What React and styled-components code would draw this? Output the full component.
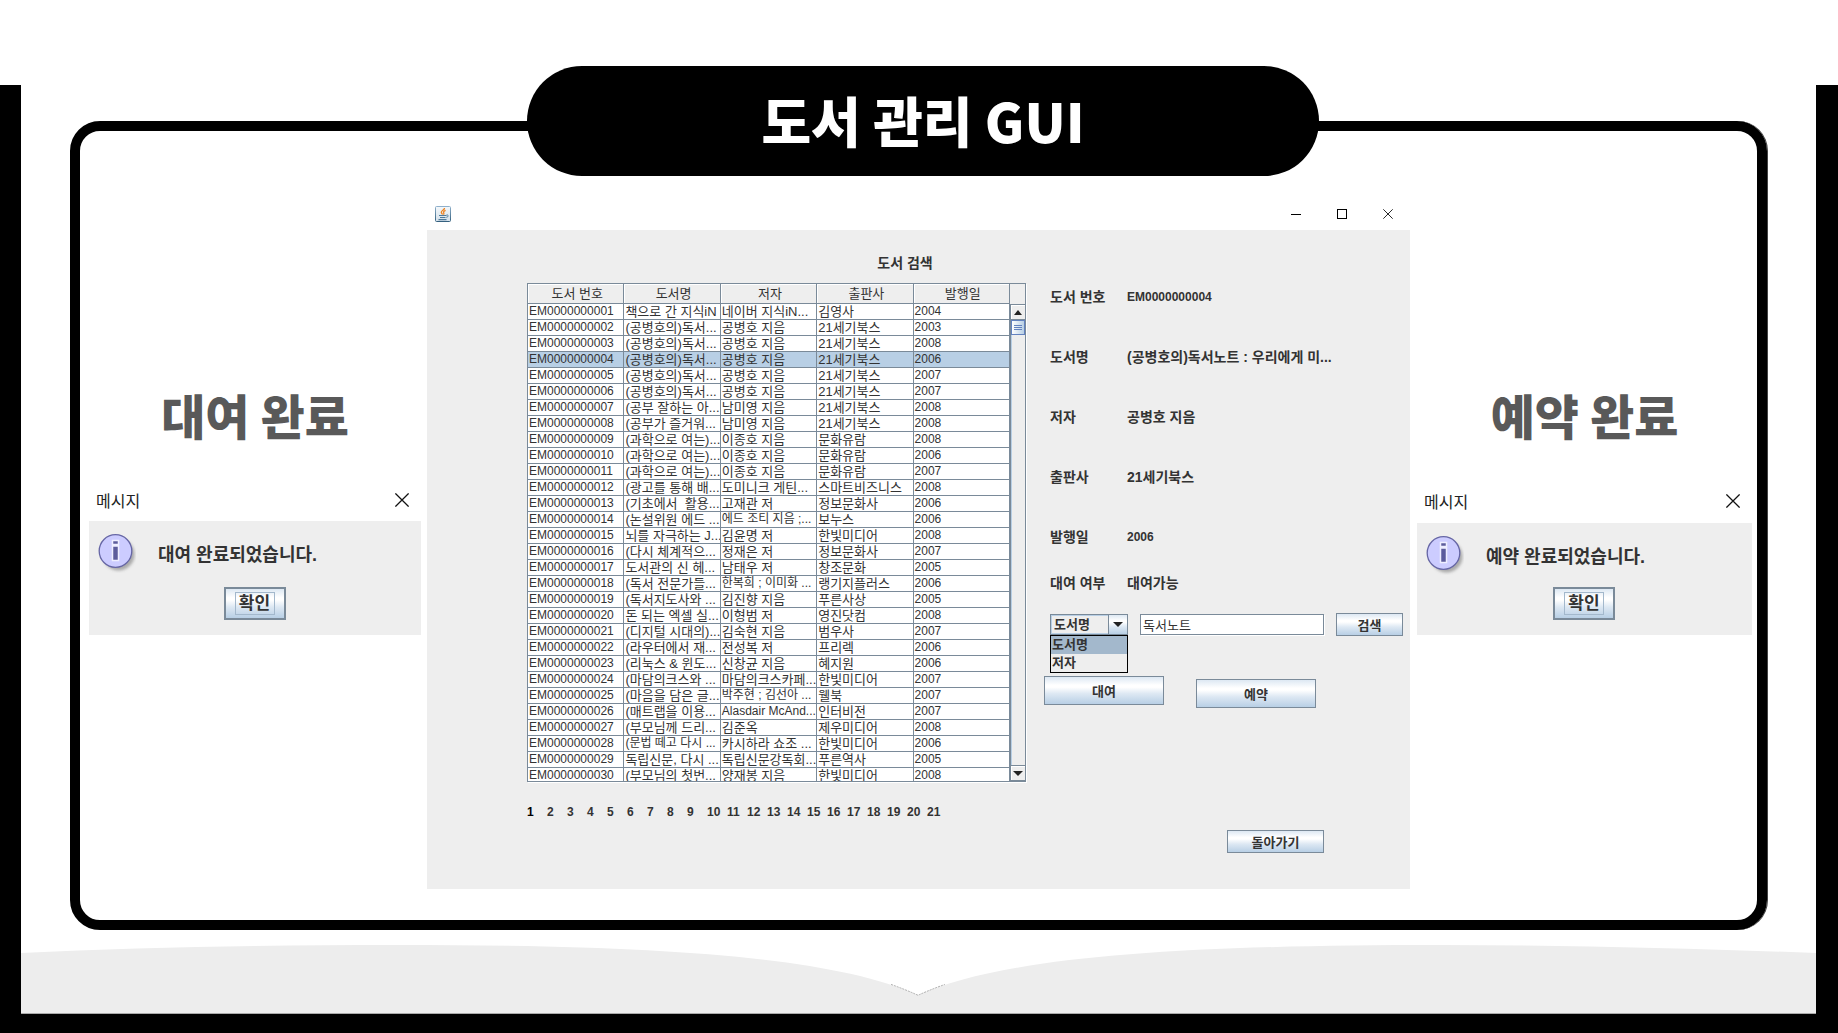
import React, { useState } from "react";
import styled, { createGlobalStyle, css } from "styled-components";

const GlobalStyle = createGlobalStyle`
  * { box-sizing: border-box; }
  body {
    margin: 0;
    background: #fff;
    color: #333;
    font-family: "Liberation Sans", "Noto Sans CJK KR", sans-serif;
  }
  button, input, select { font-family: inherit; color: inherit; margin: 0; }
  p, h1, h2, ul, dl, dd { margin: 0; padding: 0; }
`;

const metal = css`
  background: linear-gradient(#dde8f3 0%, #fff 30%, #fff 38%, #dde8f3 62%, #b8cfe5 100%);
`;

/* ---------- slide ---------- */

const Slide = styled.div`
  display: flex;
  flex-direction: column;
  min-height: 100vh;
  padding-top: 85px;
`;

const Book = styled.div`
  flex: 1;
  display: flex;
  flex-direction: column;
  justify-content: space-between;
  padding-top: 36px;
  border: solid #000;
  border-width: 0 22px 19px 21px;
`;

const Frame = styled.main`
  position: relative;
  display: grid;
  grid-template-columns: 1fr 983px 1fr;
  margin: 0 49px 15px;
  padding: 68px 0 31px;
  border: 10px solid #000;
  border-radius: 30px;
  box-shadow: 1px 0 #444;
`;

const Banner = styled.h1`
  position: absolute;
  top: -65px;
  left: 447px;
  right: 438px;
  height: 110px;
  line-height: 108px;
  border-radius: 55px;
  background: #000;
  color: #fff;
  text-align: center;
  font-family: "Noto Sans CJK KR", sans-serif;
  font-size: 54px;
  font-weight: 900;
`;

const Wave = styled.svg`
  display: block;
  width: 100%;
  height: 69px;
  border-bottom: 1px solid #aaa;
`;

/* ---------- side columns ---------- */

const Side = styled.section`
  padding: ${(p) => (p.$right ? "187px 5px 0 7px" : "187px 6px 0 9px")};
`;

const SideHeading = styled.h2`
  margin-bottom: 37px;
  line-height: 56px;
  text-align: center;
  color: #595959;
  font-family: "Noto Sans CJK KR", sans-serif;
  font-size: 48px;
  font-weight: 900;
`;

const DialogBox = styled.div`
  display: flex;
  flex-direction: column;
  height: 156px;
`;

const DialogBar = styled.div`
  display: flex;
  align-items: center;
  justify-content: space-between;
  height: ${(p) => p.$height}px;
  padding: 0 11px 0 7px;
  font-size: 16px;
  color: #222;
`;

const DialogBody = styled.div`
  flex: 1;
  display: flex;
  flex-direction: column;
  align-items: center;
  justify-content: space-between;
  padding: 12px 10px 15px 9px;
  background: #eee;
`;

const DialogMessage = styled.p`
  display: flex;
  align-items: flex-start;
  align-self: stretch;
  gap: 22px;
  line-height: 44px;
  font-size: 18px;
  font-weight: 700;
  white-space: nowrap;
`;

const ConfirmButton = styled.button`
  ${metal}
  width: 62px;
  height: 33px;
  padding: 3px 10px;
  border: 2px solid #7a8a99;
  font-size: 17px;
  font-weight: 700;
  line-height: 21px;
  white-space: nowrap;
`;

const FocusRing = styled.span`
  display: flex;
  justify-content: center;
  outline: 1px solid #a3b8cc;
`;

const IconButton = styled.button`
  display: flex;
  align-items: center;
  justify-content: center;
  width: 16px;
  height: 16px;
  padding: 0;
  border: 0;
  background: none;
`;

/* ---------- application window ---------- */

const TitleBar = styled.div`
  display: flex;
  align-items: center;
  justify-content: space-between;
  height: 31px;
  padding: 0 14px 2px 8px;
`;

const WindowButtons = styled.div`
  display: flex;
  gap: 30px;
`;

const Panel = styled.div`
  padding: 23px 7px 36px 100px;
  background: #eee;
`;

const PanelTitle = styled.h2`
  margin-bottom: 10px;
  padding-right: 120px;
  text-align: center;
  font-size: 14px;
  line-height: 20px;
`;

const Columns = styled.div`
  display: grid;
  grid-template-columns: 499px 1fr;
  gap: 18px;
`;

const ScrollPane = styled.div`
  display: flex;
  height: 499px;
  overflow: hidden;
  border: 1px solid #7a8a99;
  box-shadow: 1px 1px #fff;
`;

const Table = styled.table`
  flex: 1;
  width: 482px;
  table-layout: fixed;
  border-collapse: separate;
  border-spacing: 0;
  background: #fff;
`;

const HeadCell = styled.th`
  height: 20px;
  padding: 1px 0 0 3px;
  border: solid #7a8a99;
  border-width: 0 1px 1px 0;
  background: #eee;
  box-shadow: inset 1px 1px #fff;
  font-size: 13px;
  font-weight: 400;
  line-height: 18px;
`;

const Row = styled.tr`
  background: ${(p) => (p.$selected ? "#b8cfe5" : "#fff")};
`;

const Cell = styled.td`
  height: 16px;
  padding: 0 0 0 1px;
  overflow: hidden;
  border: solid #7a8a99;
  border-width: 0 1px 1px 0;
  font-size: ${(p) => (p.$small ? 12 : 13)}px;
  line-height: 15px;
  white-space: pre;
`;

const ScrollBar = styled.div`
  display: flex;
  flex-direction: column;
  width: 15px;
  padding-top: 20px;
`;

const ScrollArrow = styled.button`
  display: flex;
  align-items: center;
  justify-content: center;
  width: 15px;
  height: 16px;
  padding: 0;
  border: solid #7a8a99;
  border-width: 1px 0 1px 1px;
  background: #eee;
  box-shadow: inset 1px 1px #fff;
`;

const Track = styled.div`
  flex: 1;
  border-left: 1px solid #7a8a99;
  box-shadow: inset 1px 0 #b8cfe5;
`;

const Thumb = styled.div`
  display: flex;
  flex-direction: column;
  justify-content: center;
  gap: 1px;
  height: 15px;
  padding: 0 2px;
  border: 1px solid #6382bf;
  background: linear-gradient(90deg, #fff, #b8cfe5);
`;

const Grip = styled.span`
  height: 1px;
  background: #6382bf;
`;

const Pager = styled.nav`
  display: flex;
  margin-top: 20px;
`;

const PageButton = styled.button`
  width: 20px;
  padding: 0;
  border: 0;
  background: none;
  text-align: left;
  font-size: 12px;
  font-weight: 700;
  line-height: 20px;
  color: ${(p) => (p.$current ? "#000" : "#333")};
`;

/* ---------- detail column ---------- */

const DetailColumn = styled.div`
  display: flex;
  flex-direction: column;
  padding-top: 4px;
`;

const Details = styled.dl`
  display: flex;
  flex-direction: column;
  gap: 40px;
  padding-left: 6px;
  font-weight: 700;
  font-size: 14px;
  line-height: 20px;
`;

const Detail = styled.div`
  display: grid;
  grid-template-columns: 77px 1fr;
  white-space: nowrap;
`;

const DetailValue = styled.dd`
  font-size: ${(p) => (p.$small ? 12 : 14)}px;
`;

const Status = styled(Details)`
  margin-top: 26px;
`;

const SearchForm = styled.form`
  display: grid;
  grid-template-columns: 78px 1fr 67px;
  gap: 12px;
  align-items: center;
  margin: 20px 0 40px;
  padding-left: 6px;
`;

const ComboWrap = styled.div`
  position: relative;
  height: 21px;
`;

const Combo = styled.select`
  appearance: none;
  display: block;
  width: 100%;
  height: 21px;
  padding: 0 0 0 3px;
  border: 1px solid #7a8a99;
  border-radius: 0;
  background: #eee;
  box-shadow: inset 0 0 0 1px #b8cfe5;
  font-size: 13px;
  font-weight: 700;
  line-height: 18px;
`;

const ComboArrow = styled.span`
  ${metal}
  position: absolute;
  top: 1px;
  right: 1px;
  bottom: 1px;
  display: flex;
  align-items: center;
  justify-content: center;
  width: 19px;
  border-left: 1px solid #7a8a99;
  pointer-events: none;
`;

const Popup = styled.ul`
  position: absolute;
  top: 100%;
  left: 0;
  right: 0;
  border: 1px solid #000;
  background: #eee;
  list-style: none;
`;

const PopupItem = styled.li`
  height: 18px;
  padding-left: 1px;
  background: ${(p) => (p.$active ? "#a3b8cc" : "#eee")};
  font-size: 13px;
  font-weight: 700;
  line-height: 18px;
`;

const Field = styled.input`
  width: 100%;
  height: 21px;
  padding: 0 2px;
  border: 1px solid #7a8a99;
  border-radius: 0;
  background: #fff;
  box-shadow: 1px 1px #fff;
  font-size: 13px;
`;

const Button = styled.button`
  ${metal}
  height: ${(p) => (p.$tall ? 29 : 23)}px;
  padding: 0;
  border: 1px solid #7a8a99;
  font-size: 13px;
  font-weight: 700;
`;

const Actions = styled.div`
  display: grid;
  grid-template-columns: 120px 120px;
  gap: 32px;
  height: 32px;

  & > :last-child { align-self: end; }
`;

const BackRow = styled.div`
  display: grid;
  grid-template-columns: 97px;
  justify-content: end;
  margin-top: 122px;
  padding-right: 79px;
`;

/* ---------- data ---------- */

const headers = ["도서 번호", "도서명", "저자", "출판사", "발행일"];

const books = [
  ["책으로 간 지식iN", "네이버 지식iN...", "김영사", "2004"],
  ["(공병호의)독서...", "공병호 지음", "21세기북스", "2003"],
  ["(공병호의)독서...", "공병호 지음", "21세기북스", "2008"],
  ["(공병호의)독서...", "공병호 지음", "21세기북스", "2006"],
  ["(공병호의)독서...", "공병호 지음", "21세기북스", "2007"],
  ["(공병호의)독서...", "공병호 지음", "21세기북스", "2007"],
  ["(공부 잘하는 아...", "남미영 지음", "21세기북스", "2008"],
  ["(공부가 즐거워...", "남미영 지음", "21세기북스", "2008"],
  ["(과학으로 여는)...", "이종호 지음", "문화유람", "2008"],
  ["(과학으로 여는)...", "이종호 지음", "문화유람", "2006"],
  ["(과학으로 여는)...", "이종호 지음", "문화유람", "2007"],
  ["(광고를 통해 배...", "도미니크 게틴...", "스마트비즈니스", "2008"],
  ["(기초에서  활용...", "고재관 저", "정보문화사", "2006"],
  ["(논설위원 에드 ...", "에드 조티 지음 ;...", "보누스", "2006"],
  ["뇌를 자극하는 J...", "김윤명 저", "한빛미디어", "2008"],
  ["(다시 체계적으...", "정재은 저", "정보문화사", "2007"],
  ["도서관의 신 헤...", "남태우 저", "창조문화", "2005"],
  ["(독서 전문가들...", "한복희 ; 이미화 ...", "랭기지플러스", "2006"],
  ["(독서지도사와 ...", "김진향 지음", "푸른사상", "2005"],
  ["돈 되는 엑셀 실...", "이형범 저", "영진닷컴", "2008"],
  ["(디지털 시대의)...", "김숙현 지음", "범우사", "2007"],
  ["(라우터에서 재...", "전성복 저", "프리렉", "2006"],
  ["(리눅스 & 윈도...", "신창균 지음", "혜지원", "2006"],
  ["(마담의크스와 ...", "마담의크스카페...", "한빛미디어", "2007"],
  ["(마음을 담은 글...", "박주현 ; 김선아 ...", "웰북", "2007"],
  ["(매트랩을 이용...", "Alasdair McAnd...", "인터비전", "2007"],
  ["(부모님께 드리...", "김준옥", "제우미디어", "2008"],
  ["(문법 떼고 다시 ...", "카시하라 쇼조 ...", "한빛미디어", "2006"],
  ["독립신문, 다시 ...", "독립신문강독회...", "푸른역사", "2005"],
  ["(부모님의 첫번...", "양재봉 지음", "한빛미디어", "2008"],
].map((rest, i) => ["EM" + String(i + 1).padStart(10, "0"), ...rest]);

const hasHangul = (text) => /[가-힣]/.test(text);
const isSmall = (text) => !hasHangul(text) || text.length > 12;

const details = [
  ["도서 번호", "EM0000000004"],
  ["도서명", "(공병호의)독서노트 : 우리에게 미..."],
  ["저자", "공병호 지음"],
  ["출판사", "21세기북스"],
  ["발행일", "2006"],
];

/* ---------- icons ---------- */

const CloseIcon = ({ size }) => (
  <svg width={size} height={size} viewBox="0 0 10 10" stroke="#111" strokeWidth="0.9" fill="none">
    <path d="M0.3 0.3 L9.7 9.7 M9.7 0.3 L0.3 9.7" />
  </svg>
);

const Triangle = ({ up }) => (
  <svg width="10" height="5" viewBox="0 0 10 5" fill="#222">
    <path d={up ? "M5 0 L9 5 H1 Z" : "M0 0 H10 L5 5 Z"} />
  </svg>
);

const JavaIcon = () => (
  <svg width="16" height="16" viewBox="0 0 16 16" fill="none">
    <defs>
      <linearGradient id="javaBg" x1="0" y1="0" x2="0" y2="1">
        <stop offset="0" stopColor="#f4f8fb" />
        <stop offset="1" stopColor="#d3e0ea" />
      </linearGradient>
      <linearGradient id="javaEdge" x1="0" y1="0" x2="0" y2="1">
        <stop offset="0" stopColor="#8fb0cb" />
        <stop offset="1" stopColor="#35617f" />
      </linearGradient>
    </defs>
    <rect x="0.5" y="0.5" width="15" height="15" rx="1" fill="url(#javaBg)" stroke="url(#javaEdge)" />
    <path d="M9.5 2 C9.8 4 6 4.600 6.300 6.400 C6.400 7.200 7.300 7.800 7.600 8.600 M10.600 4.300 C8.600 5.200 8.200 6 8.800 7 C9 7.500 8.800 8 8.500 8.600" stroke="#ee8320" strokeWidth="1.300" />
    <path d="M4 9.500 H11.500 M5 11.500 H10.500 M3.500 13.600 H11.500" stroke="#4f7b9b" strokeWidth="1.200" />
    <path d="M11.500 9 C14 8.600 13.600 11 11.300 11.300" stroke="#4f7b9b" />
  </svg>
);

const InfoIcon = () => (
  <svg width="38" height="40" viewBox="0 0 38 40">
    <defs>
      <filter id="infoShadow" x="-20%" y="-20%" width="150%" height="150%">
        <feGaussianBlur stdDeviation="1.600" />
      </filter>
    </defs>
    <circle cx="20.500" cy="21.500" r="16" fill="#999" opacity="0.8" filter="url(#infoShadow)" />
    <circle cx="17.500" cy="18" r="16.300" fill="#ccccff" stroke="#6666a5" strokeWidth="1.300" />
    <path d="M14.500 7.500 H20.500 V11.500 H14.500 Z M14.500 13 H20.500 V27.500 H14.500 Z" fill="#5c5c9c" stroke="#eeeeff" strokeWidth="1.500" />
  </svg>
);

/* ---------- pieces ---------- */

const Dialog = ({ heading, message, barHeight, right }) => (
  <Side $right={right}>
    <SideHeading>{heading}</SideHeading>
    <DialogBox role="dialog" aria-label={heading}>
      <DialogBar $height={barHeight}>
        <span>메시지</span>
        <IconButton type="button" aria-label="닫기">
          <CloseIcon size={14} />
        </IconButton>
      </DialogBar>
      <DialogBody>
        <DialogMessage>
          <InfoIcon />
          {message}
        </DialogMessage>
        <ConfirmButton type="button">
          <FocusRing>확인</FocusRing>
        </ConfirmButton>
      </DialogBody>
    </DialogBox>
  </Side>
);

const BookTable = () => {
  const [selected, setSelected] = useState(3);
  return (
    <ScrollPane>
      <Table>
        <thead>
          <tr>
            {headers.map((h) => (
              <HeadCell key={h} scope="col">{h}</HeadCell>
            ))}
          </tr>
        </thead>
        <tbody>
          {books.map((book, i) => (
            <Row key={book[0]} $selected={i === selected} onClick={() => setSelected(i)}>
              {book.map((text, c) => (
                <Cell key={c} $small={isSmall(text)}>{text}</Cell>
              ))}
            </Row>
          ))}
        </tbody>
      </Table>
      <ScrollBar>
        <ScrollArrow type="button" aria-label="위로"><Triangle up /></ScrollArrow>
        <Track>
          <Thumb><Grip /><Grip /><Grip /></Thumb>
        </Track>
        <ScrollArrow type="button" aria-label="아래로"><Triangle /></ScrollArrow>
      </ScrollBar>
    </ScrollPane>
  );
};

const Search = () => {
  const [kind, setKind] = useState("도서명");
  const [query, setQuery] = useState("독서노트");
  const kinds = ["도서명", "저자"];
  return (
    <SearchForm onSubmit={(e) => e.preventDefault()}>
      <ComboWrap>
        <Combo aria-label="검색 기준" value={kind} onChange={(e) => setKind(e.target.value)}>
          {kinds.map((k) => <option key={k}>{k}</option>)}
        </Combo>
        <ComboArrow><Triangle /></ComboArrow>
        <Popup>
          {kinds.map((k) => (
            <PopupItem key={k} $active={k === kind} onClick={() => setKind(k)}>{k}</PopupItem>
          ))}
        </Popup>
      </ComboWrap>
      <Field aria-label="검색어" value={query} onChange={(e) => setQuery(e.target.value)} />
      <Button>검색</Button>
    </SearchForm>
  );
};

const LibraryWindow = () => (
  <section>
    <TitleBar>
      <JavaIcon />
      <WindowButtons>
        <IconButton type="button" aria-label="최소화">
          <svg width="10" height="10" viewBox="0 0 10 10"><path d="M0 5.500 H10" stroke="#000" /></svg>
        </IconButton>
        <IconButton type="button" aria-label="최대화">
          <svg width="10" height="10" viewBox="0 0 10 10"><rect x="0.5" y="0.5" width="9" height="9" fill="none" stroke="#000" /></svg>
        </IconButton>
        <IconButton type="button" aria-label="닫기">
          <CloseIcon size={10} />
        </IconButton>
      </WindowButtons>
    </TitleBar>
    <Panel>
      <PanelTitle>도서 검색</PanelTitle>
      <Columns>
        <div>
          <BookTable />
          <Pager aria-label="페이지">
            {Array.from({ length: 21 }, (_, i) => (
              <PageButton key={i} type="button" $current={i === 0}>{i + 1}</PageButton>
            ))}
          </Pager>
        </div>
        <DetailColumn>
          <Details>
            {details.map(([label, value]) => (
              <Detail key={label}>
                <dt>{label}</dt>
                <DetailValue $small={!hasHangul(value)}>{value}</DetailValue>
              </Detail>
            ))}
          </Details>
          <Status>
            <Detail>
              <dt>대여 여부</dt>
              <DetailValue>대여가능</DetailValue>
            </Detail>
          </Status>
          <Search />
          <Actions>
            <Button type="button" $tall>대여</Button>
            <Button type="button" $tall>예약</Button>
          </Actions>
          <BackRow>
            <Button type="button">돌아가기</Button>
          </BackRow>
        </DetailColumn>
      </Columns>
    </Panel>
  </section>
);

export default function App() {
  return (
    <>
      <GlobalStyle />
      <Slide>
        <Book>
          <Frame>
            <Banner>도서 관리 GUI</Banner>
            <Dialog heading="대여 완료" message="대여 완료되었습니다." barHeight={42} />
            <LibraryWindow />
            <Dialog heading="예약 완료" message="예약 완료되었습니다." barHeight={44} right />
          </Frame>
          <Wave viewBox="0 0 1795 69" preserveAspectRatio="none" aria-hidden="true">
            <path d="M0 8 C120 2 250 0 375 0 C630 0 810 11 897 51 C984 11 1165 0 1420 0 C1550 0 1680 4 1795 8 V69 H0 Z" fill="#ededed" />
            <path d="M870 40 Q884 45 897 51 Q910 45 924 40" fill="none" stroke="#aaa" strokeDasharray="2 1" />
          </Wave>
        </Book>
      </Slide>
    </>
  );
}
